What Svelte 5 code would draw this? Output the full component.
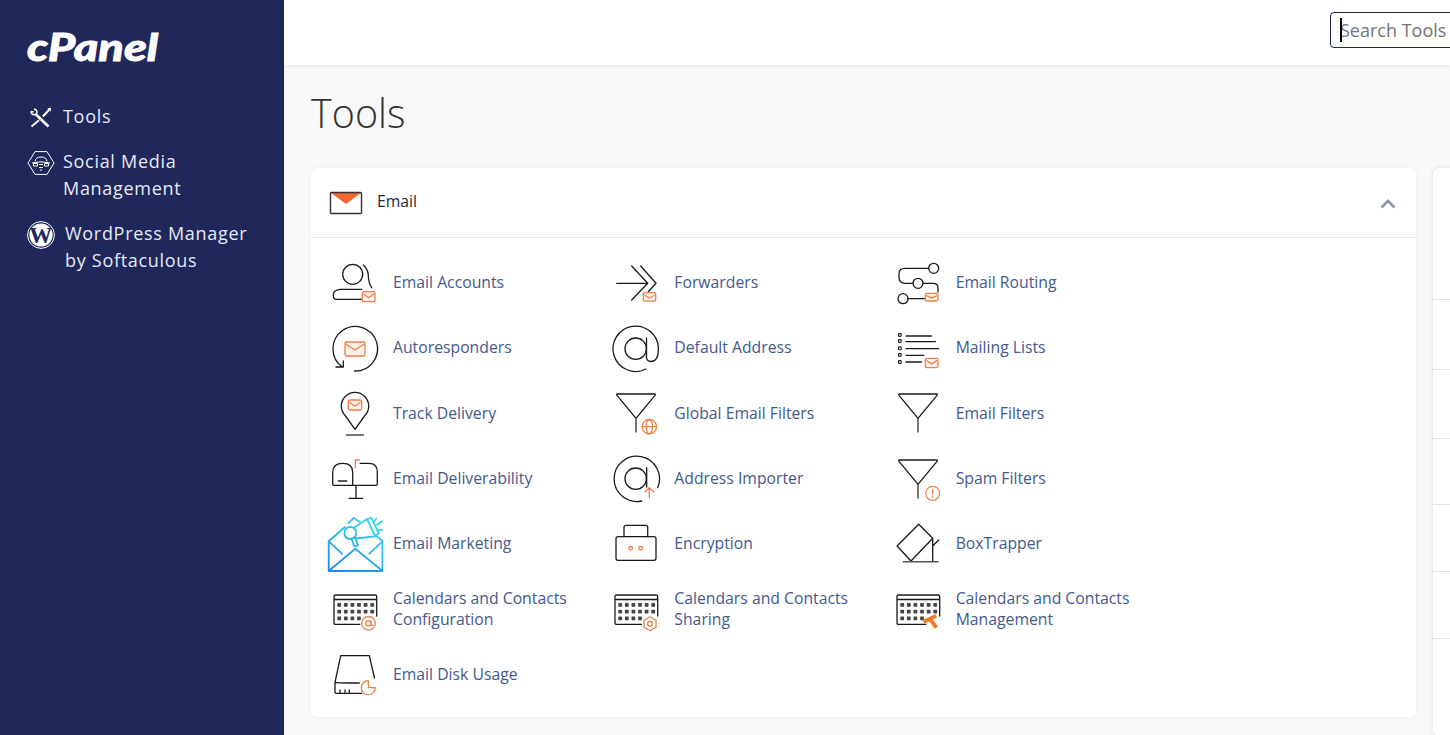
<script lang="ts">
	const tools = [
		{ id: 'accounts', label: 'Email Accounts' },
		{ id: 'forwarders', label: 'Forwarders' },
		{ id: 'routing', label: 'Email Routing' },
		{ id: 'auto', label: 'Autoresponders' },
		{ id: 'default', label: 'Default Address' },
		{ id: 'lists', label: 'Mailing Lists' },
		{ id: 'track', label: 'Track Delivery' },
		{ id: 'global', label: 'Global Email Filters' },
		{ id: 'filters', label: 'Email Filters' },
		{ id: 'deliver', label: 'Email Deliverability' },
		{ id: 'importer', label: 'Address Importer' },
		{ id: 'spam', label: 'Spam Filters' },
		{ id: 'marketing', label: 'Email Marketing' },
		{ id: 'encrypt', label: 'Encryption' },
		{ id: 'trapper', label: 'BoxTrapper' },
		{ id: 'calconf', label: 'Calendars and Contacts Configuration' },
		{ id: 'calshare', label: 'Calendars and Contacts Sharing' },
		{ id: 'calmanage', label: 'Calendars and Contacts Management' },
		{ id: 'disk', label: 'Email Disk Usage' }
	];

	// heights of the rows in the card that runs off the right edge
	const sideRows = [132, 70, 69, 66, 67, 67, 97];
	const dotRows = [
		[0, 1, 2, 3, 4, 5],
		[0, 1, 2, 3, 4, 5],
		[0, 1, 2, 3]
	];
</script>

{#snippet mail(x: number, y: number, w: number, h: number)}
	<rect class="o pale" {x} {y} width={w} height={h} rx="1.5" />
	<path class="o" d="M{x + 1.5} {y + 2.5}L{x + w / 2} {y + h / 2 + 1}L{x + w - 1.5} {y + 2.5}" />
{/snippet}

{#snippet funnel()}
	<path class="k" d="M9.5 9H46.5Q48 9 47 10.3L28 33.3L9 10.3Q8 9 9.5 9Z" />
	<path class="stem" d="M28 33.5V47.5" />
{/snippet}

{#snippet calendar()}
	<path class="k" d="M36 43.3H8.5Q7 43.3 7 41.8V15.5Q7 14 8.5 14H48.2Q49.7 14 49.7 15.5V35M7 18.5H49.7" />
	{#each dotRows as row, r}
		{#each row as c}
			<rect class="dot" x={10.3 + c * 6.6} y={22 + r * 6.7} width="3.8" height="3.8" rx="0.7" />
		{/each}
	{/each}
{/snippet}

{#snippet icon(id: string)}
	<svg class="tool-icon" viewBox="0 0 56 56" width="56" height="56" aria-hidden="true">
		{#if id === 'accounts'}
			<circle class="k" cx="25.7" cy="19.3" r="10" />
			<path class="k" d="M36.3 10Q41.5 15 41.3 21Q41.5 28 44.7 32.7M34.7 34.3H13Q6.3 35 6.3 40Q6.3 44.3 9 44.3H34.7" />
			{@render mail(35.3, 36.7, 12.7, 10)}
		{:else if id === 'forwarders'}
			<path class="k" d="M8.7 28.3H38.7M23.7 11L39.7 28.3L23.7 45M32.7 11L48 28.3L40.3 36.7" />
			{@render mail(35.3, 37.7, 12.4, 8.5)}
		{:else if id === 'routing'}
			<circle class="k" cx="43.7" cy="13.3" r="5" />
			<circle class="k" cx="28" cy="28.3" r="5" />
			<circle class="k" cx="13" cy="43.7" r="5" />
			<path class="k" d="M38.7 13.3H15Q9 13.3 9 19V22Q9 28.3 15 28.3H23M33 28.3H43Q48 28.3 48 33V37M18 43.7H35" />
			{@render mail(35.4, 38.3, 12.6, 7.7)}
		{:else if id === 'auto'}
			<path class="k" d="M27.5 51A22.3 22.3 0 1 0 15.5 47M9 47H16.3V41" />
			{@render mail(18, 22, 20, 14)}
		{:else if id === 'default'}
			<circle class="k" cx="27.7" cy="28.7" r="10.7" />
			<path class="k" d="M38.5 18V37Q38.5 41.5 43 41.5Q50.4 41.5 50.4 28.7A22.7 22.7 0 1 0 38 49" />
		{:else if id === 'lists'}
			{#each [15, 21, 28.3, 35, 42] as y}
				<rect class="k thin" x="8.4" {y} width="2.8" height="2.8" rx="0.8" transform="translate(0 -1.4)" />
			{/each}
			<path class="k" d="M16 16H41.4M16 21.7H45.4M16 28.7H48.7M16 35.3H33.7M16 42H31.4" />
			{@render mail(35.4, 38.3, 12.6, 9.4)}
		{:else if id === 'track'}
			<path class="k" d="M28 44.3L18.5 31A13.7 13.7 0 1 1 37.5 31Z" />
			<path class="stem" d="M19 50H37" />
			{@render mail(21.3, 15, 13.4, 10)}
		{:else if id === 'global'}
			{@render funnel()}
			<g class="o">
				<circle cx="41.3" cy="41.7" r="7.2" />
				<ellipse cx="41.3" cy="41.7" rx="3.2" ry="7.2" />
				<path d="M34.1 41.7H48.5" />
			</g>
		{:else if id === 'filters'}
			{@render funnel()}
		{:else if id === 'deliver'}
			<path class="k" d="M26 34.3H6.7Q5.7 34.3 5.7 33.3V21Q6 12.3 15.7 12.3Q25.7 12.3 25.7 21V34.3M33 12.3H42Q50.3 12.3 50.3 21V33.3Q50.3 34.3 49.3 34.3H25.7M11.3 30H19.7M29 34.3V47.3M22 47.3H35.7" />
			<path class="o" d="M28.3 16.7V9H32.3" />
		{:else if id === 'importer'}
			<circle class="k" cx="27.7" cy="27.7" r="10.7" />
			<path class="k" d="M38.7 16.7V36M33.7 50A22.7 22.7 0 1 1 49.7 36.7" />
			<path class="o" d="M41.3 46.7V36.7M37 41L41.3 36.7L46 41" />
		{:else if id === 'marketing'}
			<defs>
				<linearGradient id="mk" x1="42" y1="0" x2="18" y2="56" gradientUnits="userSpaceOnUse">
					<stop offset="0" stop-color="#37dbe8" />
					<stop offset="1" stop-color="#1c8df0" />
				</linearGradient>
			</defs>
			<g class="mk">
				<!-- envelope and flaps -->
				<path d="M21.5 7L26.7 2L33 6M50 20.3L55.5 25.3V54Q55.5 55 54.5 55H2.7Q1.7 55 1.7 54V25.3L18 11" />
				<path d="M1.7 25.3L15 37.7M55.5 25.3L42.3 37.7M1.7 55L28.3 32.7L55.5 55" />
				<!-- megaphone -->
				<circle cx="23.3" cy="17" r="6" />
				<path d="M26.7 12L40 3L48.3 20.3L28.3 22.5M40 3L44.3 1.8L51.7 17L48.3 20.3" />
				<path d="M24.5 23L27.5 30.5L31 29.5L28.5 22.5" />
				<path d="M50 8.7L55 5.3M51.7 13.7L56.7 14.3M47.5 5L49.5 2.5" />
			</g>
		{:else if id === 'encrypt'}
			<rect class="k" x="8" y="20.7" width="40" height="23.6" rx="2" />
			<path class="k" d="M16 20.7V11.3Q16 9.3 18 9.3H37.7Q39.7 9.3 39.7 11.3V20.7" />
			<circle class="o" cx="22.7" cy="32.3" r="1.8" />
			<circle class="o" cx="32.7" cy="32.3" r="1.8" />
		{:else if id === 'trapper'}
			<path class="k" d="M28.7 8.3L42.7 22.3L21 45L7.1 30ZM42.7 22.3V45.7M42.7 30L48.7 24" />
			<path class="stem" d="M12.7 45.7H48.7" />
		{:else if id === 'spam'}
			{@render funnel()}
			<circle class="o" cx="42.7" cy="42.3" r="7" />
			<path class="o" d="M42.7 38.5V42.8M42.7 44.8V46" />
		{:else if id === 'calconf'}
			{@render calendar()}
			<circle class="badge" cx="41.5" cy="42.3" r="8.5" />
			<circle class="o" cx="41.5" cy="42.3" r="6.8" />
			<circle class="o" cx="41.3" cy="42.3" r="2.5" />
			<path class="o" d="M43.8 39.8V43Q44 44.8 46 44.2" />
		{:else if id === 'calshare'}
			{@render calendar()}
			<path class="badge" d="M42 33.5L50 38.2V47.2L42 51.9L34 47.2V38.2Z" />
			<path class="o" d="M42 35.7L48 39.2V46.2L42 49.7L36 46.2V39.2Z" />
			<circle class="o" cx="42" cy="42.7" r="2.4" />
		{:else if id === 'calmanage'}
			{@render calendar()}
			<path class="hammer" d="M32.5 39L45.4 33.3L47 36.6L42.6 38.6L48 45.5L44.8 48L39.5 40.4L34.4 42.6Z" />
		{:else if id === 'disk'}
			<path class="k" d="M8 36.3L13.7 9.7H42.3L47.5 32M34.7 47.3H9Q8 47.3 8 46.3V36.3Q12 37 32.3 37M13 44V47.3M18 44V47.3M22.3 44V47.3" />
			<path class="o" d="M41.3 34.7A7 7 0 1 0 48.3 41.7H41.3Z" />
		{/if}
	</svg>
{/snippet}

<div class="page">
	<aside class="sidebar">
		<div class="logo">cPanel</div>
		<nav class="menu">
			<a class="menu-item first" href="#tools">
				<svg viewBox="0 0 28 28" width="28" height="28" aria-hidden="true">
					<g class="side-line">
						<!-- wrench with a forked head, screwdriver across it -->
						<path d="M8.5 10L21.5 22.5" stroke-width="2.6" />
						<path d="M3.8 7.5Q4 10.5 7 10.8Q10 10.5 10 8Q9.8 5.5 7 5M4 7.5L6.8 8" stroke-width="1.4" />
						<path d="M22.5 5.5L15.8 12.5M12 16.2L4.5 22.5" stroke-width="2" />
						<path d="M20.8 5L23.5 4L23.2 7Z" fill="#fff" />
					</g>
				</svg>
				<span>Tools</span>
			</a>
			<a class="menu-item" href="#social">
				<svg viewBox="0 0 28 28" width="28" height="28" aria-hidden="true">
					<g class="side-line">
						<path d="M1 14L8 2.6H20L27 14L20 25.4H8Z" />
						<path d="M8 12.5Q8.5 8 14 8Q19.5 8 20 12.5M5 14Q14 11.5 23 14M6.5 14.5H10.5V17H6.5ZM17.5 14.5H21.5V17H17.5ZM12 15.5H16M12 18.5H16M13 21H15" />
					</g>
				</svg>
				<span>Social Media<br />Management</span>
			</a>
			<a class="menu-item wp" href="#wp">
				<svg viewBox="0 0 28 28" width="28" height="28" aria-hidden="true">
					<circle cx="14" cy="14" r="13.4" fill="none" stroke="#fff" stroke-width="1" />
					<circle cx="14" cy="14" r="11.6" fill="#fff" />
					<text class="wp-w" x="14" y="22" text-anchor="middle">W</text>
				</svg>
				<span>WordPress Manager<br />by Softaculous</span>
			</a>
		</nav>
	</aside>

	<div class="main">
		<header class="topbar">
			<div class="search">
				<input type="text" placeholder="Search Tools" aria-label="Search Tools" />
				<span class="caret"></span>
			</div>
		</header>

		<div class="content">
			<h1>Tools</h1>
			<div class="columns">
				<section class="card">
					<div class="card-head">
						<svg viewBox="0 0 34 24" width="34" height="24" aria-hidden="true">
							<path d="M2 2H32L17 13Z" fill="#f26a2e" />
							<rect x="1.5" y="1.5" width="31" height="21" rx="1" fill="none" stroke="#333" stroke-width="1.4" />
						</svg>
						<h2>Email</h2>
						<svg class="chevron" viewBox="0 0 16 10" width="16" height="10" aria-hidden="true">
							<path d="M1.5 8.5L8 2L14.5 8.5" fill="none" stroke="#8e97ad" stroke-width="2.8" />
						</svg>
					</div>
					<div class="grid">
						{#each tools as tool}
							<a class="tool" href="#{tool.id}">
								{@render icon(tool.id)}
								<span>{tool.label}</span>
							</a>
						{/each}
					</div>
				</section>

				<aside class="side-card">
					{#each sideRows as h}
						<div class="side-row" style="height: {h}px"></div>
					{/each}
				</aside>
			</div>
		</div>
	</div>
</div>

<style>
	:global(body) {
		margin: 0;
		background: #f9f9f9;
		font-family: 'Open Sans', 'Liberation Sans', sans-serif;
	}

	.page {
		display: flex;
		width: 1450px;
		height: 735px;
		overflow: hidden;
	}

	.sidebar {
		flex: none;
		width: 284px;
		background: #20275a;
		box-sizing: border-box;
		padding: 25px 0 0 27px;
	}

	.logo {
		width: max-content;
		color: #fff;
		font-family: Lato, 'Open Sans', sans-serif;
		font-size: 38px;
		font-style: italic;
		font-weight: 900;
		line-height: 42px;
		-webkit-text-stroke: 0.8px #fff;
		transform: scaleX(1.23);
		transform-origin: left center;
	}

	.menu {
		display: flex;
		flex-direction: column;
		margin-top: 28px;
	}

	.menu-item {
		display: flex;
		align-items: flex-start;
		gap: 8px;
		padding: 8px 0 10px;
		color: #e6eaf6;
		font-size: 18px;
		line-height: 27px;
		letter-spacing: 0.7px;
		text-decoration: none;
	}

	.menu-item.first {
		padding-bottom: 8px;
	}

	.menu-item svg {
		flex: none;
		margin-top: 1px;
	}

	.menu-item.wp {
		gap: 10px;
	}

	.side-line {
		fill: none;
		stroke: #fff;
		stroke-width: 1;
	}

	.wp-w {
		fill: #20275a;
		font-family: 'Liberation Serif', serif;
		font-size: 23px;
		font-weight: 700;
	}

	.main {
		flex: none;
		width: 1166px;
		display: flex;
		flex-direction: column;
	}

	.topbar {
		flex: none;
		height: 65px;
		background: #fff;
		box-shadow: 0 1px 4px rgba(0, 0, 0, 0.09);
		display: flex;
		align-items: center;
		padding-left: 1046px;
		box-sizing: border-box;
		position: relative;
	}

	.search {
		flex: none;
		position: relative;
		width: 260px;
		margin-top: -5px;
	}

	.search input {
		display: block;
		width: 100%;
		height: 36px;
		box-sizing: border-box;
		border: 1px solid #20275a;
		border-radius: 4px;
		padding: 0 9px;
		outline: none;
		font-family: inherit;
		font-size: 18px;
		color: #333;
	}

	.search input::placeholder {
		color: #757575;
		opacity: 1;
	}

	.caret {
		position: absolute;
		left: 10px;
		top: 6px;
		width: 2px;
		height: 24px;
		background: #000;
	}

	.content {
		padding: 0 0 0 27px;
	}

	h1 {
		margin: 0;
		padding-top: 23px;
		height: 80px;
		font-size: 39.5px;
		line-height: 50px;
		font-weight: 300;
		color: #333;
	}

	.columns {
		display: flex;
		align-items: flex-start;
		gap: 17px;
	}

	.card {
		flex: none;
		width: 1105px;
		height: 549px;
		background: #fff;
		border-radius: 6px;
		box-shadow: 0 0 4px rgba(0, 0, 0, 0.05);
	}

	.card-head {
		display: flex;
		align-items: center;
		height: 69px;
		padding: 0 20px 0 18px;
		border-bottom: 1px solid #e8e8e8;
	}

	h2 {
		flex: 1;
		margin: -4px 0 0 14px;
		font-size: 15.75px;
		font-weight: 400;
		color: #1c2b3a;
	}

	.chevron {
		margin-top: 3px;
	}

	.grid {
		display: grid;
		grid-template-columns: repeat(3, 281.33px);
		grid-auto-rows: 65.3px;
		padding: 12px 0 0 16px;
	}

	.tool {
		display: flex;
		align-items: center;
		gap: 10px;
		color: #44598f;
		font-size: 15.75px;
		line-height: 21px;
		text-decoration: none;
	}

	.tool span {
		width: 190px;
	}

	.tool-icon {
		flex: none;
	}

	.k {
		fill: none;
		stroke: #1a1a1a;
		stroke-width: 1.3;
		stroke-linecap: round;
		stroke-linejoin: round;
	}

	.k.thin {
		stroke-width: 1.1;
	}

	.stem {
		fill: none;
		stroke: #555;
		stroke-width: 1.6;
	}

	.o {
		fill: none;
		stroke: #ee7f48;
		stroke-width: 1.3;
		stroke-linecap: round;
		stroke-linejoin: round;
	}

	.o.pale {
		fill: #fdf1ea;
	}

	.badge {
		fill: #fff;
	}

	.dot {
		fill: #444;
	}

	.hammer {
		fill: #ef7a26;
	}

	.mk {
		fill: none;
		stroke: url(#mk);
		stroke-width: 1.8;
		stroke-linejoin: round;
		stroke-linecap: round;
	}

	.side-card {
		flex: none;
		width: 300px;
		background: #fff;
		border-radius: 6px 0 0 6px;
		box-shadow: 0 0 4px rgba(0, 0, 0, 0.12);
	}

	.side-row {
		box-sizing: border-box;
		border-bottom: 1px solid #e2e2e2;
	}
</style>
